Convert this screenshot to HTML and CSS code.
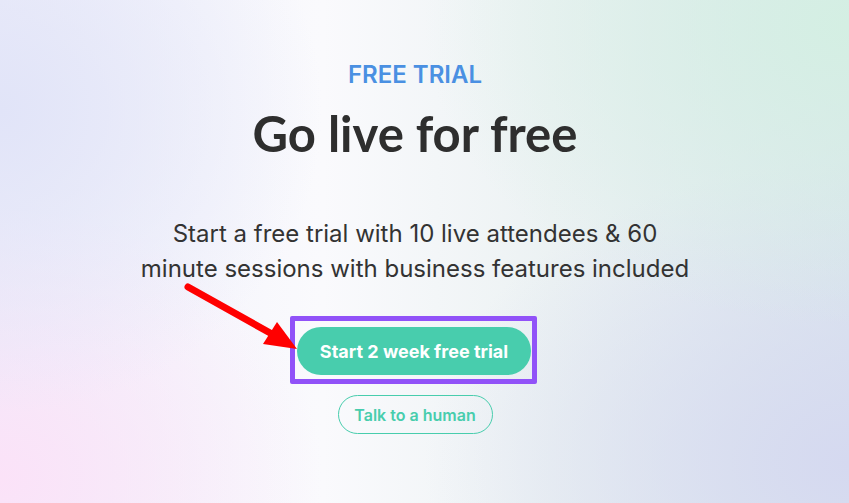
FILE: index.html
```html
<!DOCTYPE html>
<html lang="en">
<head>
    <meta charset="UTF-8">
    <meta name="viewport" content="width=device-width, initial-scale=1.0">
    <title>Free Trial</title>
    <link rel="stylesheet" href="styles.css">
</head>
<body>
    <div class="trial">
        <p class="eyebrow">FREE TRIAL</p>
        <h1 class="title">Go live for free</h1>
        <p class="lead">Start a free trial with 10 live attendees &amp; 60 minute sessions with business features included</p>
        <div class="highlight">
            <a class="btn btn-primary" href="#">Start 2 week free trial</a>
        </div>
        <a class="btn btn-outline" href="#">Talk to a human</a>
    </div>
    <svg class="arrow" width="130" height="80" viewBox="0 0 130 80">
        <line x1="8" y1="7" x2="92" y2="54" stroke="#ff0000" stroke-width="7" stroke-linecap="round"/>
        <polygon points="117,69 83,64 97,42" fill="#ff0000"/>
    </svg>
</body>
</html>
```

FILE: styles.css
```css
html, body {
    margin: 0;
    height: 100%;
}
body {
    font-family: Inter, "Noto Sans", sans-serif;
    color: #333;
    overflow: hidden;
    position: relative;
    background-color: #f4f4f9;
    background-image:
        radial-gradient(ellipse 38% 60% at 0% 22%, #e1e4f8, rgba(225, 228, 248, 0)),
        radial-gradient(ellipse 38% 55% at 0% 95%, #fbe2f8, rgba(251, 226, 248, 0)),
        radial-gradient(ellipse 50% 60% at 100% 5%, #d4efe3, rgba(212, 239, 227, 0)),
        radial-gradient(ellipse 50% 60% at 100% 92%, #d5d9f0, rgba(213, 217, 240, 0)),
        linear-gradient(to right, #efeffa, #fafafd 38%, #ecf2f3 65%, #dde7ee);
}
.trial {
    display: flex;
    flex-direction: column;
    align-items: center;
    padding: 60px 19px 0 0;
    text-align: center;
}
.eyebrow {
    margin: 0;
    font-size: 24px;
    line-height: 29px;
    font-weight: 600;
    color: #4a90e2;
}
.title {
    margin: 16px 0 0;
    font-family: Lato, "Open Sans", sans-serif;
    font-size: 49px;
    line-height: 56px;
    font-weight: 700;
    color: #2e2e2e;
}
.lead {
    margin: 55px 0 0;
    width: 556px;
    font-size: 24px;
    line-height: 35px;
    color: #333;
}
.highlight {
    margin: 30px 3px 0 0;
    border: 5px solid #9152f8;
    border-radius: 2px;
    padding: 6px 1px 4px 2px;
}
.btn {
    display: inline-flex;
    align-items: center;
    justify-content: center;
    text-decoration: none;
    box-sizing: border-box;
    font-weight: 700;
}
.btn-primary {
    width: 234px;
    height: 48px;
    border-radius: 24px;
    background-color: #48cdad;
    color: #fff;
    font-size: 18px;
}
.btn-outline {
    margin-top: 11px;
    width: 155px;
    height: 39px;
    border-radius: 20px;
    border: 1px solid #48cdad;
    color: #48cdad;
    font-size: 16px;
    font-weight: 600;
}
.arrow {
    position: absolute;
    left: 180px;
    top: 280px;
}
```
